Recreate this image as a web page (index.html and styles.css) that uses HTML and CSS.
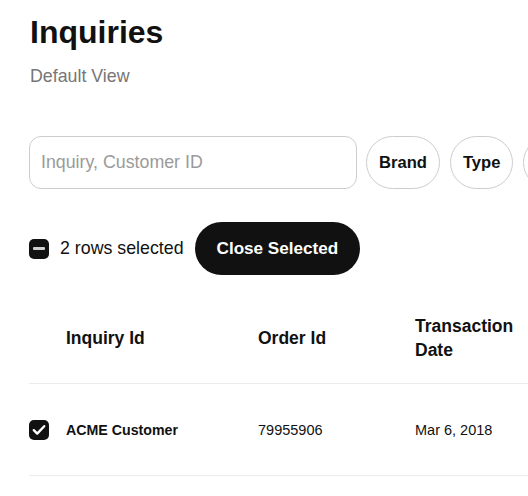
FILE: index.html
```html
<!DOCTYPE html>
<html>
<head>
<meta charset="utf-8">
<link rel="stylesheet" href="styles.css">
</head>
<body>
<div class="page">
  <h1 class="title">Inquiries</h1>
  <div class="subtitle">Default View</div>

  <div class="filters">
    <input class="search" type="text" placeholder="Inquiry, Customer ID">
    <button class="pill">Brand</button>
    <button class="pill">Type</button>
    <button class="pill more" aria-label="Status"></button>
  </div>

  <div class="selection">
    <span class="box indeterminate"><span class="dash"></span></span>
    <span class="sel-text">2 rows selected</span>
    <button class="primary">Close Selected</button>
  </div>

  <div class="table">
    <div class="row head">
      <div class="cell"></div>
      <div class="cell">Inquiry Id</div>
      <div class="cell">Order Id</div>
      <div class="cell">Transaction<br>Date</div>
    </div>
    <div class="row">
      <div class="cell">
        <span class="box checked">
          <svg width="14" height="12" viewBox="0 0 14 12"><path d="M1.8 6.2 L5.2 9.6 L12.2 2.2" fill="none" stroke="#fff" stroke-width="2.4" stroke-linecap="round" stroke-linejoin="round"/></svg>
        </span>
      </div>
      <div class="cell strong">ACME Customer</div>
      <div class="cell">79955906</div>
      <div class="cell">Mar 6, 2018</div>
    </div>
  </div>
</div>
</body>
</html>
```
FILE: styles.css
```css
html, body {
  margin: 0;
  padding: 0;
  background: #fff;
  overflow: hidden;
}
body {
  font-family: "Liberation Sans", Arial, sans-serif;
  color: #111;
}
.page {
  padding: 14px 0 0 29px;
  width: 900px;
}
.title {
  margin: 0 0 0 1px;
  font-size: 32px;
  font-weight: bold;
  line-height: 37px;
}
.subtitle {
  margin: 15px 0 0 1px;
  font-size: 17.8px;
  line-height: 21px;
  color: #767676;
}
.filters {
  display: flex;
  align-items: center;
  gap: 10px;
  margin-top: 49px;
}
.search {
  box-sizing: border-box;
  width: 328px;
  height: 53px;
  border: 1px solid #cdcdcd;
  border-radius: 12px;
  padding: 0 11px;
  font-family: inherit;
  font-size: 17.8px;
  color: #111;
  outline: none;
  margin-right: -1px;
}
.search::placeholder {
  color: #9a9a9a;
}
.pill {
  box-sizing: border-box;
  height: 53px;
  padding: 0 12px;
  border: 1px solid #cdcdcd;
  border-radius: 999px;
  background: #fff;
  font-family: inherit;
  font-size: 16.6px;
  font-weight: bold;
  color: #111;
}
.pill.more {
  width: 70px;
}
.selection {
  display: flex;
  align-items: center;
  margin-top: 33px;
}
.box {
  box-sizing: border-box;
  width: 20px;
  height: 20px;
  border-radius: 5px;
  background: #111;
  display: inline-flex;
  align-items: center;
  justify-content: center;
  flex: none;
}
.dash {
  width: 12px;
  height: 2.5px;
  border-radius: 1px;
  background: #d0d0d0;
}
.sel-text {
  margin-left: 11px;
  font-size: 17.8px;
}
.primary {
  margin-left: 11px;
  height: 53px;
  padding: 0 22px;
  border: none;
  border-radius: 999px;
  background: #111;
  color: #fff;
  font-family: inherit;
  font-size: 17.1px;
  font-weight: bold;
}
.table {
  margin-top: 18px;
}
.row {
  display: grid;
  grid-template-columns: 37px 192px 157px 1fr;
  height: 91px;
  border-bottom: 1px solid #ececec;
  font-size: 14.5px;
}
.row.head {
  height: 90px;
  font-size: 17.5px;
  font-weight: bold;
  line-height: 24px;
}
.cell {
  display: flex;
  align-items: center;
}
.strong {
  font-weight: bold;
  font-size: 14.2px;
}
```
